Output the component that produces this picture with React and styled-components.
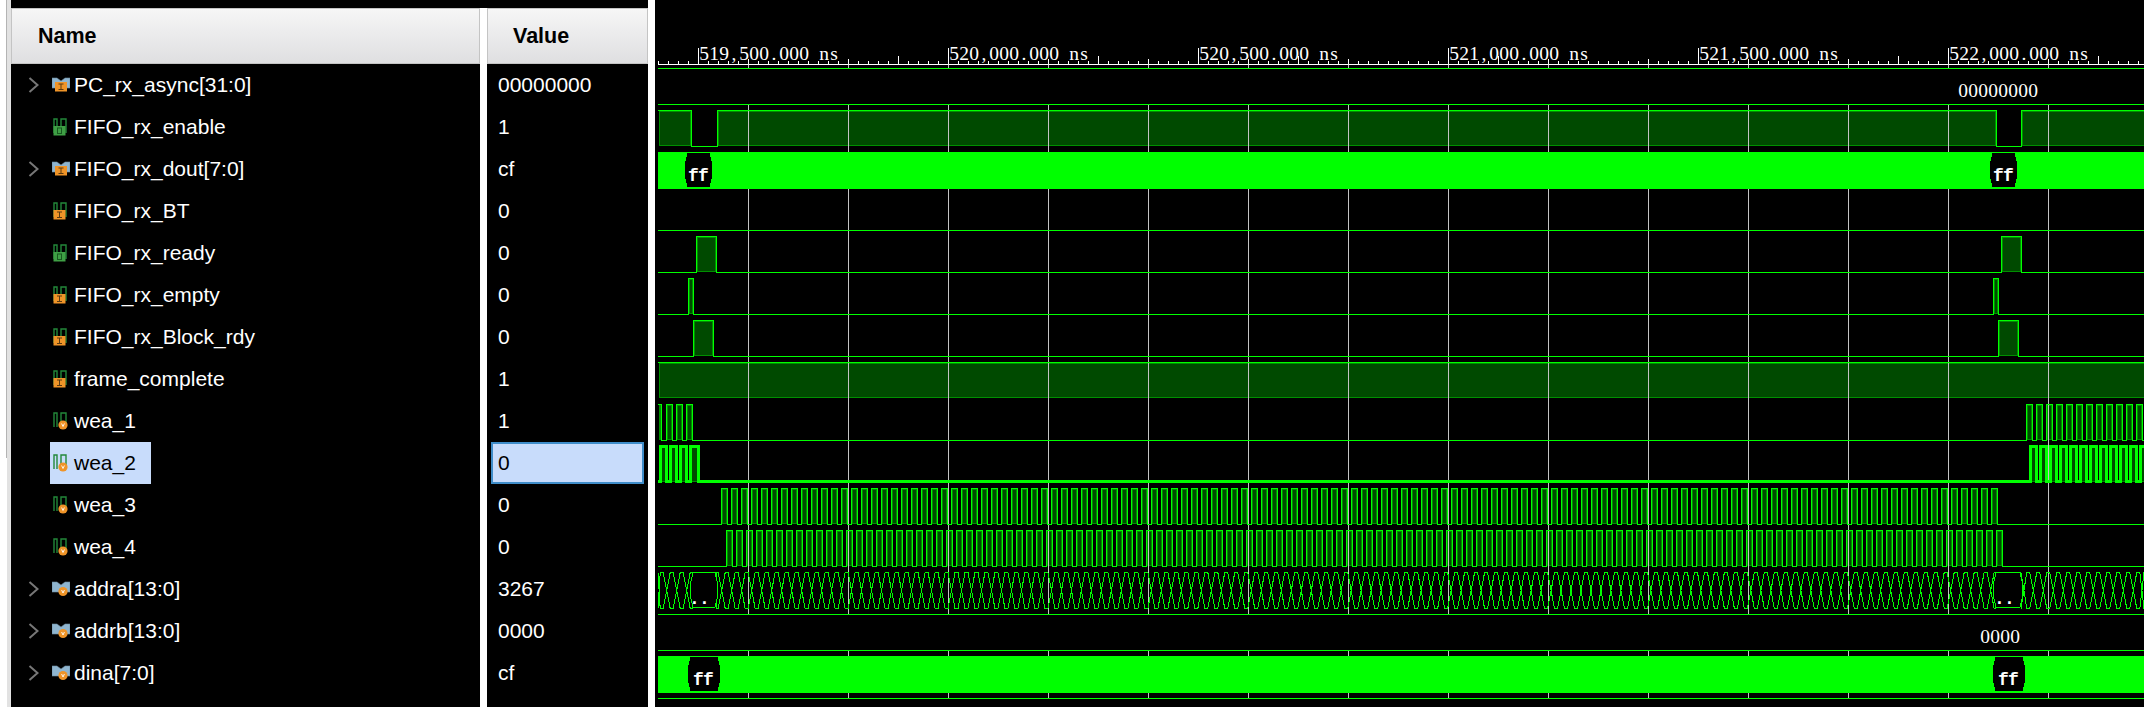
import styled, { createGlobalStyle } from 'styled-components';

const GlobalStyle = createGlobalStyle`
    html, body {
        margin: 0;
        padding: 0;
        background: #000;
    }
`;

const Window = styled.div`
    width: 2144px;
    height: 707px;
    overflow: hidden;
    display: grid;
    grid-template-columns: 11px 469px 7px 161px 7px 1489px;
    background: #000;
    font-family: "Liberation Sans", Arial, sans-serif;
`;

const EdgeStrip = styled.div`
    display: flex;
    background: #fff;
`;

const EdgeRule = styled.div`
    width: 1px;
    height: 458px;
    margin-left: 6px;
    background: #b4b4b4;
`;

const EdgeShade = styled.div`
    flex: 1;
    background: #e2e2e2;
`;

const ColumnGap = styled.div`
    background: #fff;
    margin-top: ${(p) => (p.$full ? '0' : '8px')};
`;

const Column = styled.div`
    display: flex;
    flex-direction: column;
    padding-top: 8px;
    background: #000;
`;

const HeaderCell = styled.div`
    box-sizing: border-box;
    height: 56px;
    display: flex;
    align-items: center;
    padding-left: ${(p) => p.$pad}px;
    border: 1px solid #c4c4c4;
    background: linear-gradient(#f6f6f6, #dfdfe1);
    color: #000;
    font-size: 21.5px;
    font-weight: bold;
`;

const Row = styled.div`
    height: 42px;
    display: flex;
    align-items: center;
`;

const ChevronSlot = styled.div`
    width: 39px;
    padding-left: 17px;
    box-sizing: border-box;
    display: flex;
    align-items: center;
`;

const NameTag = styled.div`
    height: 100%;
    display: flex;
    align-items: center;
    gap: 4px;
    padding: 0 15px 0 2px;
    font-size: 21px;
    color: ${(p) => (p.$selected ? '#000' : '#fff')};
    background: ${(p) => (p.$selected ? '#c8dcfb' : 'transparent')};
`;

const ValueCell = styled.div`
    box-sizing: border-box;
    height: 42px;
    display: flex;
    align-items: center;
    font-size: 21px;
    margin: 0 4px;
    padding-left: 5px;
    color: ${(p) => (p.$selected ? '#000' : '#fff')};
    background: ${(p) => (p.$selected ? '#c8dcfb' : 'transparent')};
    border: 2px solid ${(p) => (p.$selected ? '#3f8dc9' : 'transparent')};
`;

const WavePane = styled.div`
    background: #000;
`;

const WaveSvg = styled.svg`
    display: block;
    shape-rendering: crispEdges;
`;

const Trace = styled.path`
    fill: none;
    stroke: ${(p) => p.$color || '#00ff00'};
    stroke-width: ${(p) => p.$width || 1}px;
`;

const RulerText = styled.text`
    font-family: "Liberation Serif", "Times New Roman", serif;
    font-size: 19.5px;
    fill: #fff;
`;

const BusText = styled.text`
    font-family: "Liberation Mono", "Courier New", monospace;
    font-size: 18px;
    font-weight: bold;
    letter-spacing: -0.8px;
    fill: #fff;
`;

const signals = [
    { name: 'PC_rx_async[31:0]', value: '00000000', icon: 'busI', bus: true },
    { name: 'FIFO_rx_enable', value: '1', icon: 'wireO' },
    { name: 'FIFO_rx_dout[7:0]', value: 'cf', icon: 'busI', bus: true },
    { name: 'FIFO_rx_BT', value: '0', icon: 'wireI' },
    { name: 'FIFO_rx_ready', value: '0', icon: 'wireO' },
    { name: 'FIFO_rx_empty', value: '0', icon: 'wireI' },
    { name: 'FIFO_rx_Block_rdy', value: '0', icon: 'wireI' },
    { name: 'frame_complete', value: '1', icon: 'wireI' },
    { name: 'wea_1', value: '1', icon: 'wireV' },
    { name: 'wea_2', value: '0', icon: 'wireV', selected: true },
    { name: 'wea_3', value: '0', icon: 'wireV' },
    { name: 'wea_4', value: '0', icon: 'wireV' },
    { name: 'addra[13:0]', value: '3267', icon: 'busV', bus: true },
    { name: 'addrb[13:0]', value: '0000', icon: 'busV', bus: true },
    { name: 'dina[7:0]', value: 'cf', icon: 'busV', bus: true },
];

function Chevron() {
    return (
        <svg width="11" height="16" viewBox="0 0 11 16">
            <polyline points="1.5,1 9.5,8 1.5,15" fill="none" stroke="#777" strokeWidth="2" />
        </svg>
    );
}

function SignalIcon({ kind }) {
    const isBus = kind.startsWith('bus');
    const badge = kind.slice(-1);
    return (
        <svg width="18" height="18" viewBox="0 0 18 18">
            {isBus ? (
                <path d="M0 2h5l4 3 4-3h5v10H0z" fill="#8fb5cf" stroke="#6d8a9e" strokeWidth="0.6" />
            ) : (
                <path d="M2 15V1h3v14M9 15V1h5v14" fill="none" stroke="#23883a" strokeWidth="1.4" />
            )}
            {badge === 'V' && <circle cx="11" cy={isBus ? 11.5 : 13} r="4.6" fill="#ef9428" />}
            {badge === 'V' && <path d={`M9.6 ${isBus ? 10 : 11.5}l1.4 3 1.4-3`} fill="none" stroke="#fff" strokeWidth="0.9" />}
            {badge === 'I' && <rect x={isBus ? 3 : 1.5} y={isBus ? 6 : 8} width="12" height="9.5" fill="#ef9428" />}
            {badge === 'I' && <path d={`M${isBus ? 6.5 : 5}  ${isBus ? 8 : 10}h5M${isBus ? 9 : 7.5} ${isBus ? 8 : 10}v5.5M${isBus ? 6.5 : 5} ${isBus ? 13.5 : 15.5}h5`} fill="none" stroke="#5a3a10" strokeWidth="1" />}
            {badge === 'O' && <rect x="1.5" y="8" width="12" height="9.5" fill="#3f9f45" />}
            {badge === 'O' && <rect x="5.5" y="10" width="4" height="5.5" fill="none" stroke="#17591f" strokeWidth="1" />}
        </svg>
    );
}

const LEFT = 658;
const RIGHT = 2144;

const train = (start, end, period, width) => {
    const out = [];
    for (let x = start; x <= end; x += period) {
        out.push([x, Math.min(x + width, RIGHT + 4)]);
    }
    return out;
};

// bright outline of a digital signal, highs = [[x1, x2], ...]
function digitalPath(highs, top, bottom) {
    const t = top + 0.5;
    const b = bottom + 0.5;
    let cursor = LEFT;
    let d = `M${LEFT} ${highs[0][0] <= LEFT ? t : b}`;
    highs.forEach(([x1, x2]) => {
        if (x1 > cursor) {
            d += `H${x1 + 0.5}V${t}`;
        }
        d += `H${Math.min(x2, RIGHT) + 0.5}`;
        if (x2 < RIGHT) {
            d += `V${b}`;
        }
        cursor = x2;
    });
    if (cursor < RIGHT) {
        d += `H${RIGHT}`;
    }
    return d;
}

function DimFill({ highs, top, bottom }) {
    return highs.map(([x1, x2]) => {
        const left = Math.max(x1, LEFT);
        return (
            <rect
                key={x1}
                x={left + 1.5}
                y={top + 1.5}
                width={Math.max(Math.min(x2, RIGHT + 4) - left - 2, 1)}
                height={bottom - top - 2}
                fill="#004a00"
                stroke="#008f00"
                strokeWidth="1"
            />
        );
    });
}

function Hex({ x1, x2, top, bottom }) {
    const mid = (top + bottom) / 2;
    const d = `M${x1} ${mid}L${x1 + 1} ${top + 9}L${x1 + 3} ${top + 0.5}H${x2 - 3}L${x2 - 1} ${top + 9}L${x2} ${mid}L${x2 - 1} ${bottom - 9}L${x2 - 3} ${bottom - 0.5}H${x1 + 3}L${x1 + 1} ${bottom - 9}Z`;
    return <path d={d} fill="#000" stroke="#00ff00" strokeWidth="1" />;
}

// criss-cross of a bus changing every clock, step = px between two changes
function crossing(firstPeak, step, from, to, top, bottom) {
    const up = [];
    const down = [];
    for (let p = firstPeak - 2 * step; p < to + 2 * step; p += 2 * step) {
        [[p - 1.5, top], [p + 1.5, top], [p + step - 1.5, bottom], [p + step + 1.5, bottom]].forEach(([x, y]) => {
            const cx = Math.max(from, Math.min(to, x));
            up.push([cx, y + 0.5]);
            down.push([cx, (y === top ? bottom : top) + 0.5]);
        });
    }
    const toPath = (pts) => pts.map(([x, y], i) => `${i ? 'L' : 'M'}${x} ${y}`).join('');
    return toPath(up) + toPath(down);
}

const enableHighs = [[LEFT, 691], [717, 1996], [2021, RIGHT + 4]];
const wea1Highs = [[LEFT, 661], ...train(666, 686, 10, 6), ...train(2026, RIGHT, 10, 6)];
const wea2Highs = [...train(660, 680, 10, 6), [690, 698], ...train(2030, RIGHT, 10, 6)];
const wea3Highs = train(721, 1991, 10, 6);
const wea4Highs = train(726, 1996, 10, 6);
const readyHighs = [[696, 716], [2001, 2021]];
const emptyHighs = [[688, 693], [1993, 1998]];
const blockHighs = [[693, 713], [1998, 2018]];
const frameHighs = [[LEFT, RIGHT + 4]];

const rowLines = [68, 104, 230, 650, 614, 698];
const majors = [
    [698, '519,500.000 ns'],
    [948, '520,000.000 ns'],
    [1198, '520,500.000 ns'],
    [1448, '521,000.000 ns'],
    [1698, '521,500.000 ns'],
    [1948, '522,000.000 ns'],
];

// the waveform viewer prints at a fixed 10px pitch, so each glyph gets its own x
const glyphWidth = (c) => {
    if (c === ',' || c === '.' || c === ' ') return 5;
    if (c === 's') return 7.6;
    return 9.75;
};

const pitched = (label, start) =>
    label.split('').map((c, i) => start + i * 10 + (10 - glyphWidth(c)) / 2).join(' ');

function tickPath() {
    let d = '';
    for (let x = LEFT; x <= RIGHT; x += 10) {
        const off = x - 698;
        let h = 3;
        if (off % 100 === 50 || off % 100 === -50) h = 5;
        if (off % 200 === 0) h = 8;
        if (off % 250 === 0) h = 16;
        d += `M${x + 0.5} 64V${64 - h}`;
    }
    return d;
}

function gridPath() {
    let d = '';
    for (let x = 748; x <= RIGHT; x += 100) {
        d += `M${x + 0.5} 64V698`;
    }
    return d;
}

function Waveforms() {
    return (
        <WaveSvg width="1489" height="707" viewBox="655 0 1489 707">
            {/* dim fills go under the grid */}
            <DimFill highs={enableHighs} top={110} bottom={146} />
            <DimFill highs={readyHighs} top={236} bottom={272} />
            <DimFill highs={emptyHighs} top={278} bottom={314} />
            <DimFill highs={blockHighs} top={320} bottom={356} />
            <DimFill highs={frameHighs} top={362} bottom={398} />
            <DimFill highs={wea1Highs} top={404} bottom={440} />
            <DimFill highs={wea2Highs} top={446} bottom={482} />
            <DimFill highs={wea3Highs} top={488} bottom={524} />
            <DimFill highs={wea4Highs} top={530} bottom={566} />

            <Trace d={gridPath()} $color="#c4c4c4" />

            {/* ruler */}
            <Trace d={`M${LEFT} 64.5H${RIGHT}`} $color="#fff" />
            <Trace d={tickPath()} $color="#fff" />
            {majors.map(([x, label]) => (
                <RulerText key={x} x={pitched(label, x + 1)} y={60}>{label}</RulerText>
            ))}

            {/* constant bus rows cover the grid */}
            <rect x={LEFT} y="68" width="1486" height="36" fill="#000" />
            <rect x={LEFT} y="614" width="1486" height="36" fill="#000" />
            {rowLines.map((y) => (
                <Trace key={y} d={`M${LEFT} ${y + 0.5}H${RIGHT}`} />
            ))}
            <RulerText x={pitched('00000000', 1958)} y="97">00000000</RulerText>
            <RulerText x={pitched('0000', 1980)} y="643">0000</RulerText>

            {/* FIFO_rx_enable */}
            <Trace d={digitalPath(enableHighs, 110, 146)} />

            {/* FIFO_rx_dout */}
            <rect x={LEFT} y="152" width="1486" height="37" fill="#00ff00" />
            <Hex x1={684} x2={713} top={152} bottom={188} />
            <Hex x1={1989} x2={2018} top={152} bottom={188} />
            <BusText x="688" y="181">ff</BusText>
            <BusText x="1993" y="181">ff</BusText>

            <Trace d={digitalPath(readyHighs, 236, 272)} />
            <Trace d={digitalPath(emptyHighs, 278, 314)} />
            <Trace d={digitalPath(blockHighs, 320, 356)} $width={1.5} />
            <Trace d={digitalPath(frameHighs, 362, 398)} />
            <Trace d={digitalPath(wea1Highs, 404, 440)} />
            <Trace d={digitalPath(wea2Highs, 446, 481)} $width={3} />
            <Trace d={digitalPath(wea3Highs, 488, 524)} />
            <Trace d={digitalPath(wea4Highs, 530, 566)} />

            {/* addra */}
            <Trace d={crossing(671.7, 10, LEFT, 692, 572, 608)} />
            <Trace d={crossing(726.7, 9.992, 716, 1995, 572, 608)} />
            <Trace d={crossing(2028.3, 10, 2021, RIGHT, 572, 608)} />
            <Hex x1={690} x2={718} top={572} bottom={608} />
            <Hex x1={1993} x2={2023} top={572} bottom={608} />
            <BusText x="689" y="604">..</BusText>
            <BusText x="1994" y="604">..</BusText>

            {/* dina */}
            <rect x={LEFT} y="656" width="1486" height="37" fill="#00ff00" />
            <Hex x1={687} x2={721} top={656} bottom={692} />
            <Hex x1={1992} x2={2026} top={656} bottom={692} />
            <BusText x="693" y="685">ff</BusText>
            <BusText x="1998" y="685">ff</BusText>
        </WaveSvg>
    );
}

export default function App() {
    return (
        <Window>
            <GlobalStyle />
            <EdgeStrip>
                <div><EdgeRule /></div>
                <EdgeShade />
            </EdgeStrip>
            <Column>
                <HeaderCell $pad={26}>Name</HeaderCell>
                {signals.map((s) => (
                    <Row key={s.name}>
                        <ChevronSlot>{s.bus && <Chevron />}</ChevronSlot>
                        <NameTag $selected={s.selected}>
                            <SignalIcon kind={s.icon} />
                            {s.name}
                        </NameTag>
                    </Row>
                ))}
            </Column>
            <ColumnGap />
            <Column>
                <HeaderCell $pad={25}>Value</HeaderCell>
                {signals.map((s) => (
                    <ValueCell key={s.name} $selected={s.selected}>{s.value}</ValueCell>
                ))}
            </Column>
            <ColumnGap $full />
            <WavePane>
                <Waveforms />
            </WavePane>
        </Window>
    );
}
